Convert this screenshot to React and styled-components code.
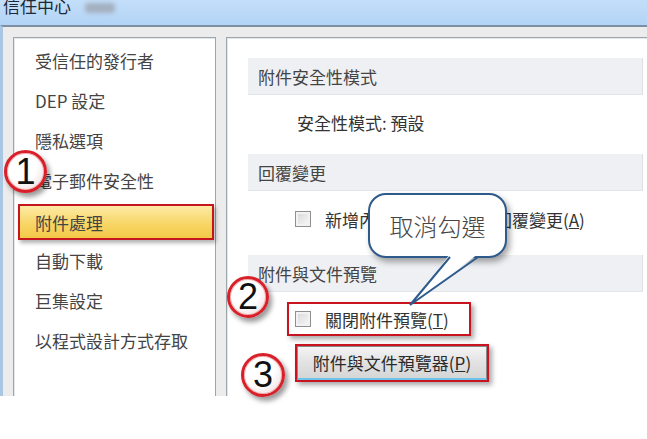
import React from "react";
import styled, { createGlobalStyle } from "styled-components";

const GlobalStyle = createGlobalStyle`
  html, body {
    margin: 0;
    padding: 0;
    background: #ffffff;
  }
  body {
    font-family: "Noto Sans CJK TC", "Liberation Sans", sans-serif;
  }
`;

const Screen = styled.div`
  position: relative;
  width: 647px;
  height: 439px;
  overflow: hidden;
  background: #ffffff;
`;

const Window = styled.div`
  height: 396px;
  display: flex;
  flex-direction: column;
  overflow: hidden;
`;

const TitleBar = styled.div`
  height: 25px;
  flex: none;
  display: flex;
  align-items: flex-start;
  gap: 14px;
  padding-left: 3px;
  overflow: hidden;
  background: linear-gradient(#c3def9, #b3d4f6);
`;

const TitleText = styled.div`
  font-size: 17px;
  line-height: 17px;
  margin-top: -3px;
  color: #1d2836;
`;

const TitleSmudge = styled.div`
  width: 30px;
  height: 10px;
  margin-top: 3px;
  border-radius: 4px;
  background: #a3b0bf;
  filter: blur(2px);
`;

const Body = styled.div`
  flex: 1;
  min-height: 0;
  display: flex;
  gap: 10px;
  padding: 10px 0 0 10px;
  background: #ececec;
  border-top: 2px solid #7d8fa1;
  border-left: 3px solid #a9c6e4;
`;

const Panel = styled.div`
  background: #ffffff;
  border: 1px solid #9ea6ad;
  border-bottom: none;
  box-shadow: inset 1px 1px 0 #e4e7ea;
`;

const NavPanel = styled(Panel)`
  width: 203px;
  flex: none;
  box-sizing: border-box;
  padding-top: 2px;
`;

const NavItem = styled.div`
  height: ${(p) => (p.$selected ? "36px" : "40px")};
  margin: ${(p) => (p.$selected ? "4px 1px 0 4px" : "0")};
  padding-left: ${(p) => (p.$selected ? "15px" : "21px")};
  box-sizing: border-box;
  display: flex;
  align-items: center;
  font-size: 17px;
  color: #444444;
  white-space: nowrap;
  border: ${(p) => (p.$selected ? "2px solid #c4161c" : "none")};
  background: ${(p) =>
    p.$selected ? "linear-gradient(#fdeba6, #f7d461 60%, #f4c94a)" : "none"};
  box-shadow: ${(p) => (p.$selected ? "2px 3px 4px rgba(0,0,0,0.3)" : "none")};
`;

const MainPanel = styled(Panel)`
  flex: 1;
  margin-right: -20px;
  border-right: none;
  padding: 20px 24px 0 21px;
  display: flex;
  flex-direction: column;
`;

const SectionHeader = styled.div`
  height: 36px;
  flex: none;
  display: flex;
  align-items: center;
  padding-left: 10px;
  font-size: 17px;
  color: #444444;
  background: #eef0f3;
  border-bottom: 1px solid #e1e4e9;
  box-shadow: inset -1px 0 0 #dde1e6;
`;

const SettingRow = styled.div`
  height: ${(p) => p.$height}px;
  flex: none;
  display: flex;
  align-items: center;
  gap: 14px;
  padding-left: ${(p) => p.$indent}px;
  padding-bottom: ${(p) => p.$lift || 0}px;
  box-sizing: border-box;
  font-size: 17px;
  color: #333333;
  white-space: nowrap;
`;

const CheckBox = styled.span`
  width: 14px;
  height: 14px;
  flex: none;
  border: 1px solid #8e8f8f;
  background: linear-gradient(135deg, #d6d6d6, #fafafa);
  box-shadow: inset 0 0 0 2px #f2f2f2;
`;

const Annotation = styled.div`
  align-self: flex-start;
  margin: ${(p) => p.$margin};
  display: flex;
  align-items: center;
  gap: 14px;
  height: ${(p) => p.$height}px;
  box-sizing: border-box;
  padding: ${(p) => p.$padding};
  border: 2px solid #c8141e;
  box-shadow: 3px 3px 5px rgba(0, 0, 0, 0.35);
  font-size: 17px;
  color: #333333;
  white-space: nowrap;
  background: #ffffff;
`;

const PushButton = styled.div`
  width: 190px;
  height: 34px;
  box-sizing: border-box;
  display: flex;
  align-items: center;
  justify-content: center;
  font-size: 17px;
  color: #2a2a2a;
  background: linear-gradient(#f4f4f4, #e2e2e2 50%, #d6d6d6);
  border: 1px solid #8a8a8a;
  border-bottom: 2px solid #6cc4ea;
`;

const Badge = styled.div`
  position: absolute;
  left: ${(p) => p.$x}px;
  top: ${(p) => p.$y}px;
  width: ${(p) => p.$size}px;
  height: ${(p) => p.$size}px;
  box-sizing: border-box;
  border-radius: 50%;
  border: 3px solid #d8202a;
  background: radial-gradient(circle at 40% 35%, #ffffff 45%, #f1e4e4 80%, #e6c4c4);
  box-shadow: 3px 4px 5px rgba(0, 0, 0, 0.4), inset 0 0 0 1px #f6b0b0;
  display: flex;
  align-items: center;
  justify-content: center;
  font-family: "Liberation Sans", Arial, sans-serif;
  font-size: 36px;
  line-height: 1;
  color: #111111;
`;

const Callout = styled.div`
  position: absolute;
  left: 368px;
  top: 193px;
  width: 139px;
  height: 65px;
  box-sizing: border-box;
  border: 2px solid #2f5b8c;
  border-radius: 18px;
  background: #ffffff;
  box-shadow: 3px 4px 6px rgba(0, 0, 0, 0.35);
  display: flex;
  align-items: center;
  justify-content: center;
  font-size: 24px;
  font-weight: 300;
  color: #454545;
`;

const CalloutTail = styled.svg`
  position: absolute;
  left: 400px;
  top: 250px;
  overflow: visible;
`;

const navItems = [
  "受信任的發行者",
  "DEP 設定",
  "隱私選項",
  "電子郵件安全性",
  "附件處理",
  "自動下載",
  "巨集設定",
  "以程式設計方式存取",
];

export default function App() {
  return (
    <Screen>
      <GlobalStyle />
      <Window>
        <TitleBar>
          <TitleText>信任中心</TitleText>
          <TitleSmudge />
        </TitleBar>
        <Body>
          <NavPanel>
            {navItems.map((label) => (
              <NavItem key={label} $selected={label === "附件處理"}>
                {label}
              </NavItem>
            ))}
          </NavPanel>
          <MainPanel>
            <SectionHeader>附件安全性模式</SectionHeader>
            <SettingRow $height={59} $indent={49} $lift={4}>
              安全性模式: 預設
            </SettingRow>
            <SectionHeader>回覆變更</SectionHeader>
            <SettingRow $height={64} $indent={47} $lift={8}>
              <CheckBox />
              <span>
                新增內容到附件以啟用回覆變更(<u>A</u>)
              </span>
            </SettingRow>
            <SectionHeader>附件與文件預覽</SectionHeader>
            <Annotation $margin="10px 0 0 39px" $height={34} $padding="0 20px 0 6px">
              <CheckBox />
              <span>
                關閉附件預覽(<u>T</u>)
              </span>
            </Annotation>
            <Annotation $margin="8px 0 0 47px" $height={38} $padding="0">
              <PushButton>
                附件與文件預覽器(<u>P</u>)
              </PushButton>
            </Annotation>
          </MainPanel>
        </Body>
      </Window>

      <Callout>取消勾選</Callout>
      <CalloutTail width="85" height="60" viewBox="0 0 85 60">
        <polygon points="50,4 78,4 10,55" fill="#ffffff" />
        <polyline points="50,7 10,55 78,7" fill="none" stroke="#2f5b8c" strokeWidth="2" />
      </CalloutTail>

      <Badge $x={4} $y={150} $size={43}>1</Badge>
      <Badge $x={227} $y={276} $size={42}>2</Badge>
      <Badge $x={241} $y={353} $size={44}>3</Badge>
    </Screen>
  );
}
